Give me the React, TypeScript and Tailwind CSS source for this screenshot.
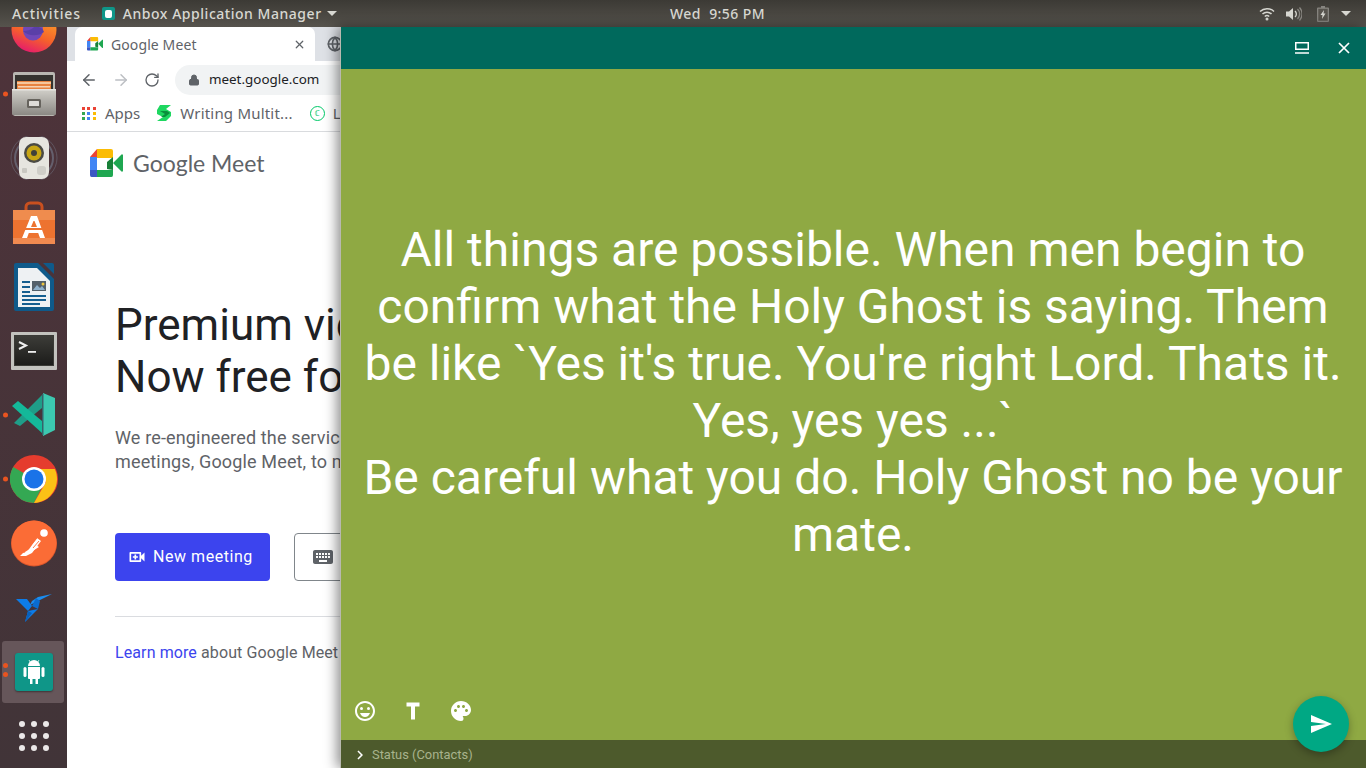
import { ArrowLeft, ArrowRight, Globe, Lock, RotateCw, X } from "lucide-react";
import {
  MdChevronRight,
  MdKeyboard,
  MdOutlineEmojiEmotions,
  MdOutlineVideoCall,
  MdPalette,
  MdSend,
} from "react-icons/md";

function MeetLogo({ size }: { size: number }) {
  return (
    <svg width={size} height={size * 0.85} viewBox="0 0 33 28" className="shrink-0">
      <path d="M7 0h14a2 2 0 0 1 2 2v7h-16z" fill="#fbbc04" />
      <path d="M7 0v8H0z" fill="#ea4335" />
      <path d="M0 8h7v13H0z" fill="#4285f4" />
      <path d="M0 21h7v7H2a2 2 0 0 1-2-2z" fill="#3b57c4" />
      <path d="M7 21h16v5a2 2 0 0 1-2 2H7z" fill="#1fa751" />
      <path d="M23 8v13l-6-1v-7z" fill="#188038" />
      <path d="M23 14 31.500 5.500a1 1 0 0 1 1.500 1v15a1 1 0 0 1-1.500 1z" fill="#1fa751" />
    </svg>
  );
}

function FirefoxIcon() {
  return (
    <svg width="46" height="46" viewBox="0 0 46 46">
      <defs>
        <linearGradient id="ff" x1="0.7" y1="0" x2="0.3" y2="1">
          <stop offset="0" stopColor="#ffb029" />
          <stop offset="0.6" stopColor="#f5622a" />
          <stop offset="1" stopColor="#e5186f" />
        </linearGradient>
      </defs>
      <circle cx="23" cy="23" r="22.500" fill="url(#ff)" />
      <ellipse cx="22" cy="23" rx="10" ry="10.500" fill="#7048b8" />
      <path d="M12 24c4 0 9-1 12-5 4 1 8 2 9 6-5 4-15 5-21-1z" fill="#5a3fa8" />
    </svg>
  );
}

function FilesIcon() {
  return (
    <svg width="44" height="44" viewBox="0 0 44 44">
      <defs>
        <linearGradient id="cab" x1="0" y1="0" x2="0" y2="1">
          <stop offset="0" stopColor="#d2d0ca" />
          <stop offset="1" stopColor="#8b8984" />
        </linearGradient>
      </defs>
      <rect x="1" y="0" width="42" height="44" rx="2" fill="#b9b7b1" />
      <rect x="3" y="3" width="38" height="16" fill="#35332f" />
      <rect x="5" y="9" width="34" height="8" fill="#e8833f" />
      <rect x="5" y="10" width="34" height="2" fill="#f6c79c" />
      <rect x="6" y="14" width="32" height="1.500" fill="#f6d3b3" />
      <rect x="0" y="17" width="44" height="26" rx="1" fill="url(#cab)" />
      <rect x="0" y="17" width="44" height="1.500" fill="#e6e4df" />
      <rect x="15" y="27" width="14" height="9" rx="1.500" fill="#66635d" />
      <rect x="17" y="29" width="10" height="5" rx="0.500" fill="#dedcd8" />
    </svg>
  );
}

function SpeakerIcon() {
  return (
    <svg width="48" height="44" viewBox="0 0 48 44">
      <circle cx="24" cy="22" r="23" fill="none" stroke="#6d6b78" strokeWidth="1" opacity="0.6" />
      <circle cx="24" cy="22" r="19" fill="none" stroke="#7d8ba0" strokeWidth="2" opacity="0.5" />
      <rect x="9" y="1" width="30" height="42" rx="7" fill="#e6e5df" />
      <circle cx="24" cy="17" r="10" fill="#4a4a44" />
      <circle cx="24" cy="17" r="7.500" fill="#c7a514" />
      <circle cx="24" cy="17" r="3" fill="#40403a" />
      <rect x="12" y="32" width="5" height="5" rx="1" fill="#c9c8c2" />
      <rect x="27" y="30" width="9" height="9" rx="3" fill="#cfcec8" />
    </svg>
  );
}

function StoreIcon() {
  return (
    <svg width="44" height="44" viewBox="0 0 44 44">
      <path d="M14 10V6a4 4 0 0 1 4-4h8a4 4 0 0 1 4 4v4" fill="none" stroke="#c9501f" strokeWidth="3" />
      <path d="M1 9h42v34H1z" fill="#ed7330" />
      <path d="M1 9h42v10H1z" fill="#ef8c4e" />
      <path d="M1 37h42v6H1z" fill="#f08a50" />
      <path d="M19 15h6l8 22h-5l-1.800-5H16.800L15 37h-5z" fill="#fff" />
      <path d="M21.500 20h1L25 26h-6z" fill="#ed7330" />
      <path d="M13 27h18v2H13z" fill="#ed7330" />
    </svg>
  );
}

function WriterIcon() {
  return (
    <svg width="40" height="48" viewBox="0 0 40 48">
      <path d="M2 0h22l16 16v30a2 2 0 0 1-2 2H2a2 2 0 0 1-2-2V2a2 2 0 0 1 2-2z" fill="#0f5a8a" />
      <path d="M29 0h9a2 2 0 0 1 2 2v9z" fill="#0f5a8a" />
      <path d="M4 5h19l13 13v26H4z" fill="#eef1f3" />
      <path d="M8 18h8v2H8zM8 23h8v2H8zM8 28h8v2H8zM8 32h24v2H8zM8 36h24v2H8zM8 40h18v2H8z" fill="#155e8f" />
      <rect x="18" y="18" width="14" height="10" fill="#54606a" />
      <path d="M19 27l4-5 3 3 2-2 3 4z" fill="#8eb0cb" />
      <circle cx="29" cy="21" r="1.500" fill="#f0c63e" />
    </svg>
  );
}

function TerminalIcon() {
  return (
    <svg width="46" height="38" viewBox="0 0 46 38">
      <defs>
        <linearGradient id="term" x1="0" y1="0" x2="0" y2="1">
          <stop offset="0" stopColor="#3c3c38" />
          <stop offset="1" stopColor="#1c1c1a" />
        </linearGradient>
      </defs>
      <rect width="46" height="38" rx="1" fill="#c2c2be" />
      <rect x="3" y="3" width="40" height="31" fill="#3a3a36" />
      <rect x="4" y="4" width="38" height="29" fill="url(#term)" />
      <path d="M8 10l7 3.500-7 3.500" fill="none" stroke="#eee" strokeWidth="2" />
      <path d="M17 19h8v1.800h-8z" fill="#eee" />
    </svg>
  );
}

function VscodeIcon() {
  return (
    <svg width="44" height="44" viewBox="0 0 44 44">
      <path d="M30 2v13L8 33l-6-3z" fill="#1f9d88" />
      <path d="M0 13l6-5 24 20v12z" fill="#14b899" />
      <path d="M31 0l12 5v32l-12 6z" fill="#3cc8b0" />
      <path d="M30 1h1.500v41H30z" fill="#37616a" />
    </svg>
  );
}

function ChromeIcon() {
  return (
    <svg width="48" height="48" viewBox="0 0 48 48">
      <circle cx="24" cy="24" r="24" fill="#e53c2e" />
      <path d="M24 24 3.200 12A24 24 0 0 0 24 48l12-24z" fill="#34a853" />
      <path d="M24 14h20.800A24 24 0 0 1 24 48l12-21z" fill="#fbc116" />
      <circle cx="24" cy="24" r="12" fill="#fff" />
      <circle cx="24" cy="24" r="9.500" fill="#1a73e8" />
    </svg>
  );
}

function PostmanIcon() {
  return (
    <svg width="46" height="47" viewBox="0 0 46 47">
      <circle cx="23" cy="23.500" r="23" fill="#d9552b" />
      <circle cx="23" cy="23" r="22.500" fill="#fb6c36" />
      <circle cx="33" cy="13" r="3.800" fill="#fff" />
      <path d="M9 36l3-3 4-1 10-14 4 3-9 12-6 3z" fill="#fff" />
      <path d="M15 35l13-8-3-2-11 7z" fill="#fff" />
      <path d="M20 25l6-7M22 28l6-7" stroke="#fb6c36" strokeWidth="0.900" />
    </svg>
  );
}

function BirdIcon() {
  return (
    <svg width="36" height="28" viewBox="0 0 36 28">
      <path d="M0 5h11l5 7-4 5z" fill="#0d7ce8" />
      <path d="M14 11 36 0l-14 3 -6 4z" fill="#1a8df0" />
      <path d="M16 12l4-8 4 3-2 8z" fill="#0a6cd0" />
      <path d="M12 17l10-2-13 13z" fill="#0d7ce8" />
      <path d="M9 28l3-11 4 2z" fill="#0860bb" />
    </svg>
  );
}

function AnboxIcon() {
  return (
    <div className="w-[38px] h-[38px] rounded-[3px] bg-[#0f9688] flex items-center justify-center shadow-[0_1px_2px_rgba(0,0,0,0.4)]">
      <svg width="22" height="27" viewBox="0 0 22 27">
        <path d="M5 8a6 6 0 0 1 12 0z" fill="#fff" />
        <path d="M6 2 7.500 4.500M16 2l-1.500 2.500" stroke="#fff" strokeWidth="0.800" />
        <path d="M5 9h12v11a1 1 0 0 1-1 1h-1v5h-2.500v-5h-3v5H7v-5H6a1 1 0 0 1-1-1z" fill="#fff" />
        <rect x="0.500" y="9" width="3" height="10" rx="1.500" fill="#fff" />
        <rect x="18.500" y="9" width="3" height="10" rx="1.500" fill="#fff" />
      </svg>
    </div>
  );
}

const dockItems = [
  { key: "firefox", icon: <FirefoxIcon /> },
  { key: "files", icon: <FilesIcon />, dots: 1 },
  { key: "speaker", icon: <SpeakerIcon /> },
  { key: "store", icon: <StoreIcon /> },
  { key: "writer", icon: <WriterIcon /> },
  { key: "terminal", icon: <TerminalIcon /> },
  { key: "vscode", icon: <VscodeIcon />, dots: 1 },
  { key: "chrome", icon: <ChromeIcon />, dots: 1 },
  { key: "postman", icon: <PostmanIcon /> },
  { key: "bird", icon: <BirdIcon /> },
];

function Dock() {
  return (
    <aside className="w-[67px] shrink-0 overflow-hidden bg-gradient-to-b from-[#4e333a] to-[#413438] flex flex-col">
      <div className="-mt-[29px] flex flex-col">
        {dockItems.map((item) => (
          <div key={item.key} className="relative h-[64.2px] flex items-center justify-center">
            {item.dots && <span className="absolute left-[3px] top-1/2 -translate-y-1/2 w-[5px] h-[5px] rounded-full bg-[#e95420]" />}
            {item.icon}
          </div>
        ))}
        <div className="relative h-[64.2px] flex items-center justify-center">
          <div className="absolute left-[2px] top-[1px] w-[62px] h-[62px] rounded-[3px] bg-[#66565a]" />
          <span className="absolute left-[3px] top-[23px] w-[5px] h-[5px] rounded-full bg-[#e95420]" />
          <span className="absolute left-[3px] top-[32px] w-[5px] h-[5px] rounded-full bg-[#e95420]" />
          <div className="relative">
            <AnboxIcon />
          </div>
        </div>
        <div className="h-[64.2px] flex items-center justify-center">
          <div className="grid grid-cols-3 gap-x-[6px] gap-y-[6px]">
            {Array.from({ length: 9 }).map((_, i) => (
              <span key={i} className="w-[6px] h-[6px] rounded-full bg-[#ebe8e8]" />
            ))}
          </div>
        </div>
      </div>
    </aside>
  );
}

function TopBar() {
  return (
    <header className="relative h-[27px] shrink-0 bg-gradient-to-b from-[#3c3a35] to-[#56534d] flex items-center justify-between font-['Noto_Sans',sans-serif] text-[14px] font-medium text-[#d8d8d2] tracking-[0.45px]">
      <div className="flex items-center">
        <span className="ml-[12px] tracking-[0.85px]">Activities</span>
        <span className="ml-[21px] w-[13px] h-[13px] rounded-[2px] bg-[#0f9688] flex items-center justify-center">
          <span className="w-[7px] h-[8px] rounded-[2px] bg-white" />
        </span>
        <span className="ml-[8px] tracking-[0.53px]">Anbox Application Manager</span>
        <span className="ml-[5px] w-0 h-0 border-x-[5px] border-x-transparent border-t-[5px] border-t-[#d8d8d2]" />
      </div>
      <span className="absolute left-[670px]">Wed&nbsp; 9:56 PM</span>
      <div className="flex items-center pr-[15px]">
        <svg width="16" height="14" viewBox="0 0 16 14" fill="none" stroke="#d8d8d2" strokeWidth="1.500">
          <path d="M1 4.500a10 10 0 0 1 14 0M3.500 7a6.500 6.500 0 0 1 9 0M5.800 9.500a3.200 3.200 0 0 1 4.400 0" />
          <circle cx="8" cy="12" r="1.500" fill="#d8d8d2" stroke="none" />
        </svg>
        <svg width="16" height="14" viewBox="0 0 16 14" className="ml-[11px]">
          <path d="M0 4.500h3L7 1v12L3 9.500H0z" fill="#d8d8d2" />
          <path d="M9 4a4 4 0 0 1 0 6" fill="none" stroke="#d8d8d2" strokeWidth="1.300" />
          <path d="M11.500 2a7 7 0 0 1 0 10M13.500 .500a9.500 9.500 0 0 1 0 13" fill="none" stroke="#8a8883" strokeWidth="1.300" />
        </svg>
        <svg width="12" height="16" viewBox="0 0 12 16" className="ml-[15px]">
          <path d="M4 0h4v1.500h3a1 1 0 0 1 1 1V15a1 1 0 0 1-1 1H1a1 1 0 0 1-1-1V2.500a1 1 0 0 1 1-1h3z" fill="#86847f" />
          <rect x="1.300" y="2.800" width="9.400" height="11.900" fill="#57544e" />
          <path d="M7 4 3.500 9h2L5 13l3.500-5.500h-2z" fill="#d8d8d2" />
        </svg>
        <span className="ml-[12px] w-0 h-0 border-x-[5px] border-x-transparent border-t-[5px] border-t-[#d8d8d2]" />
      </div>
    </header>
  );
}

function BrowserChrome() {
  return (
    <div className="shrink-0 font-['Noto_Sans',sans-serif]">
      <div className="h-[34px] bg-[#dee1e6] flex items-end pl-[8px]">
        <div className="w-[240px] h-[34px] rounded-t-[7px] bg-white flex items-center pl-[12px] pr-[9px] shrink-0">
          <MeetLogo size={16} />
          <span className="ml-[8px] text-[14px] tracking-[0.1px] text-[#5f6368]">Google Meet</span>
          <X className="ml-auto w-[13px] h-[13px] text-[#5f6368]" strokeWidth={2.200} />
        </div>
        <div className="ml-[12px] h-[34px] flex items-center">
          <Globe className="w-[16px] h-[16px] text-[#5f6368]" strokeWidth={2.500} />
        </div>
      </div>
      <div className="h-[37px] bg-white flex items-center pl-[13px]">
        <ArrowLeft className="w-[18px] h-[18px] shrink-0 text-[#5f6368]" strokeWidth={2} />
        <ArrowRight className="ml-[14px] w-[18px] h-[18px] shrink-0 text-[#bcbfc3]" strokeWidth={2} />
        <RotateCw className="ml-[14px] w-[16px] h-[16px] shrink-0 text-[#5f6368]" strokeWidth={2} />
        <div className="ml-[15px] h-[30px] flex-1 rounded-l-full bg-[#f1f3f4] flex items-center pl-[13px] whitespace-nowrap overflow-hidden">
          <Lock className="w-[12px] h-[12px] shrink-0 text-[#5f6368]" fill="#5f6368" strokeWidth={2} />
          <span className="ml-[9px] text-[13.400px] text-[#202124]">meet.google.com</span>
        </div>
      </div>
      <div className="h-[34px] pb-[3px] bg-white border-b border-[#d9dbde] flex items-center pl-[15px] whitespace-nowrap overflow-hidden text-[15px] text-[#5f6368]">
        <span className="grid grid-cols-3 gap-[2px] w-[14px] shrink-0">
          <i className="w-[3px] h-[3px] bg-[#ea4335]" />
          <i className="w-[3px] h-[3px] bg-[#ea4335]" />
          <i className="w-[3px] h-[3px] bg-[#ea4335]" />
          <i className="w-[3px] h-[3px] bg-[#34a853]" />
          <i className="w-[3px] h-[3px] bg-[#4285f4]" />
          <i className="w-[3px] h-[3px] bg-[#fbbc04]" />
          <i className="w-[3px] h-[3px] bg-[#34a853]" />
          <i className="w-[3px] h-[3px] bg-[#4285f4]" />
          <i className="w-[3px] h-[3px] bg-[#fbbc04]" />
        </span>
        <span className="ml-[9px]">Apps</span>
        <svg width="14" height="16" viewBox="0 0 14 16" className="ml-[17px] shrink-0">
          <path d="M3 0h11L9 4l5 3v4l-5 5H0l6-4-6-3V5z" fill="#1ed760" />
          <path d="M3 6h7l3 2-5 4H4l4-3z" fill="#0b8f3c" />
        </svg>
        <span className="ml-[9px] tracking-[0.2px]">Writing Multit...</span>
        <span className="ml-[17px] w-[15px] h-[15px] shrink-0 rounded-full border-[1.500px] border-[#00c868] flex items-center justify-center text-[8px] font-bold text-[#00c868]">
          ℂ
        </span>
        <span className="ml-[8px]">Learn</span>
      </div>
    </div>
  );
}

function MeetPage() {
  return (
    <div className="flex-1 bg-white font-['Roboto',sans-serif] whitespace-nowrap">
      <div className="mt-[17px] ml-[23px] flex items-center">
        <MeetLogo size={33} />
        <span className="ml-[10px] text-[23px] leading-[28px] text-[#5f6368] font-['Lato',sans-serif]">
          Google Meet
        </span>
      </div>
      <h1 className="mt-[122px] ml-[48px] text-[44px] leading-[52px] text-[#202124]">
        Premium video meetings.
        <br />
        Now free for everyone.
      </h1>
      <p className="mt-[23px] ml-[48px] text-[18px] leading-[24px] tracking-[0.15px] text-[#5f6368]">
        We re-engineered the service we built for
        <br />
        meetings, Google Meet, to make it free
      </p>
      <div className="mt-[59px] ml-[48px] flex items-center">
        <button className="w-[155px] h-[48px] rounded-[4px] bg-[#3c44ee] text-white text-[16px] font-normal flex items-center pl-[12px] shrink-0">
          <MdOutlineVideoCall className="w-[20px] h-[20px]" />
          <span className="ml-[6px] tracking-[0.55px]">New meeting</span>
        </button>
        <div className="ml-[24px] w-[120px] h-[48px] rounded-[4px] border border-[#80868b] flex items-center pl-[16px] shrink-0">
          <MdKeyboard className="w-[24px] h-[24px] text-[#5f6368]" />
        </div>
      </div>
      <div className="mt-[35px] ml-[48px] h-px bg-[#dadce0]" />
      <p className="mt-[26px] ml-[48px] text-[16px] leading-[20px] tracking-[0.1px] text-[#5f6368]">
        <span className="text-[#3c44ee]">Learn more</span> about Google Meet
      </p>
    </div>
  );
}

function StatusComposer() {
  return (
    <main className="relative flex-1 min-w-0 flex flex-col font-['Roboto',sans-serif] border-l border-[#b9b9b0] shadow-[-3px_0_12px_rgba(0,0,0,0.45)]">
      <div className="h-[42px] shrink-0 bg-[#00695c] flex items-center justify-end pr-[16px] gap-[29px]">
        <svg width="14" height="12" viewBox="0 0 14 12" fill="none" stroke="#fff" strokeWidth="1.500">
          <rect x="0.750" y="0.750" width="12.500" height="6.500" />
          <path d="M0 11h14" />
        </svg>
        <svg width="12" height="12" viewBox="0 0 12 12" stroke="#fff" strokeWidth="1.700">
          <path d="M1 1l10 10M11 1 1 11" />
        </svg>
      </div>
      <div className="flex-1 min-h-0 bg-[#8fa943] flex flex-col">
        <div className="flex-1 flex items-center justify-center pl-[20px] pr-[21px] pt-[24px]">
          <p className="w-[985px] text-center text-[48px] leading-[57px] text-white">
            All things are possible. When men begin to confirm what the Holy Ghost is saying. Them be like `Yes it's true. You're right Lord. Thats it. Yes, yes yes ...`
            <br />
            Be careful what you do. Holy Ghost no be your mate.
          </p>
        </div>
        <div className="h-[50px] shrink-0 flex items-center pl-[12px] pb-[8px] text-white">
          <MdOutlineEmojiEmotions className="w-[24px] h-[24px]" />
          <svg width="24" height="24" viewBox="0 0 24 24" fill="currentColor" className="ml-[24px]">
            <path d="M5.500 3.500h13v4h-4.500v13h-4v-13H5.500z" />
          </svg>
          <MdPalette className="ml-[24px] w-[24px] h-[24px]" />
        </div>
      </div>
      <div className="h-[28px] shrink-0 bg-[#4d5a2c] flex items-center pl-[10px] pt-px">
        <MdChevronRight className="w-[18px] h-[18px] text-white" />
        <span className="ml-[3px] text-[12.900px] text-[#a8b38c]">Status (Contacts)</span>
      </div>
      <button className="absolute right-[17px] bottom-[16px] w-[56px] h-[56px] rounded-full bg-[#00a884] shadow-[0_3px_8px_rgba(0,0,0,0.3)] flex items-center justify-center">
        <MdSend className="w-[24px] h-[24px] text-white" />
      </button>
    </main>
  );
}

export default function App() {
  return (
    <div className="w-[1366px] h-[768px] overflow-hidden flex flex-col">
      <TopBar />
      <div className="flex-1 min-h-0 flex">
        <Dock />
        <div className="w-[273px] shrink-0 flex flex-col overflow-hidden">
          <BrowserChrome />
          <MeetPage />
        </div>
        <StatusComposer />
      </div>
    </div>
  );
}
